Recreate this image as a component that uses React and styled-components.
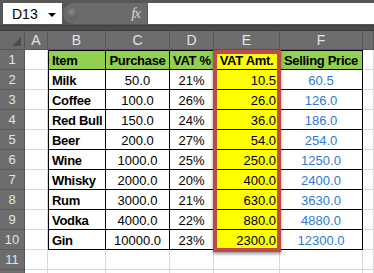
import React from 'react';
import styled, { createGlobalStyle } from 'styled-components';

const GlobalStyle = createGlobalStyle`
  html, body {
    margin: 0;
    padding: 0;
    background: #ffffff;
    overflow: hidden;
  }
  body {
    font-family: "Liberation Sans", Arial, sans-serif;
  }
`;

const rows = [
  ['Milk', '50.0', '21%', '10.5', '60.5'],
  ['Coffee', '100.0', '26%', '26.0', '126.0'],
  ['Red Bull', '150.0', '24%', '36.0', '186.0'],
  ['Beer', '200.0', '27%', '54.0', '254.0'],
  ['Wine', '1000.0', '25%', '250.0', '1250.0'],
  ['Whisky', '2000.0', '20%', '400.0', '2400.0'],
  ['Rum', '3000.0', '21%', '630.0', '3630.0'],
  ['Vodka', '4000.0', '22%', '880.0', '4880.0'],
  ['Gin', '10000.0', '23%', '2300.0', '12300.0'],
];

const headers = ['Item', 'Purchase', 'VAT %', 'VAT Amt.', 'Selling Price'];
const letters = ['A', 'B', 'C', 'D', 'E', 'F', ''];

// formula bar
const Page = styled.div`
  width: 374px;
  height: 273px;
  overflow: hidden;
`;

const FormulaBar = styled.div`
  display: flex;
  height: 22px;
  padding: 3px 0 0 3px;
  background: #585858;
`;

const NameBox = styled.div`
  display: flex;
  align-items: center;
  justify-content: space-between;
  width: 59px;
  height: 21px;
  padding: 0 6px 0 9px;
  box-sizing: border-box;
  background: #ffffff;
  font-size: 14px;
  color: #000;
`;

const Arrow = styled.span`
  width: 0;
  height: 0;
  border-left: 4px solid transparent;
  border-right: 4px solid transparent;
  border-top: 4px solid #000;
  margin-top: 2px;
`;

const FxArea = styled.div`
  display: flex;
  align-items: center;
  justify-content: space-between;
  width: 84px;
  height: 21px;
  margin-left: 1px;
  padding: 0 7px 0 4px;
  box-sizing: border-box;
  background: #6b6b6b;
  border-radius: 11px 0 0 11px;
`;

const Knob = styled.span`
  width: 11px;
  height: 11px;
  border-radius: 50%;
  background: radial-gradient(circle at 40% 35%, #8a8a8a, #4e4e4e);
`;

const Fx = styled.span`
  font-family: "Liberation Serif", serif;
  font-style: italic;
  font-size: 15px;
  color: #d6d6d6;
  letter-spacing: -1px;
`;

const FormulaInput = styled.div`
  flex: 1;
  height: 21px;
  margin-left: 1px;
  background: #ffffff;
`;

const Splitter = styled.div`
  height: 4px;
  background: #4a4a4a;
  border-bottom: 1px solid #3c3c3c;
  border-top: 1px solid #3e3e3e;
`;

// sheet
const Sheet = styled.div`
  position: relative;
  display: grid;
  grid-template-columns: 25px 23px 58px 64px 44px 66px 83px 1fr;
  grid-template-rows: 19px repeat(12, 20px);
`;

const Corner = styled.div`
  display: flex;
  align-items: flex-end;
  justify-content: flex-end;
  padding: 0 3px 3px 0;
  background: #6b6b6b;
  border-right: 1px solid #555;
  border-bottom: 1px solid #555;
`;

const ColHead = styled.div`
  display: flex;
  align-items: center;
  justify-content: center;
  background: #6d6d6d;
  color: #e4e4e4;
  font-size: 14px;
  border-right: 1px solid #575757;
  border-bottom: 1px solid #555;
`;

const RowHead = styled.div`
  display: flex;
  align-items: center;
  justify-content: center;
  background: #6d6d6d;
  color: #e4e4e4;
  font-size: 13px;
  border-right: 1px solid #555;
  border-bottom: 1px solid #5a5a5a;
`;

const Cell = styled.div`
  box-sizing: border-box;
  padding: 2px 3px 0;
  line-height: 17px;
  font-size: 13px;
  white-space: nowrap;
  overflow: hidden;
  background: ${(p) => p.$bg || '#ffffff'};
  color: ${(p) => p.$color || '#000'};
  font-weight: ${(p) => (p.$bold ? 700 : 400)};
  letter-spacing: ${(p) => (p.$bold ? '-0.3px' : '0')};
  text-align: ${(p) => p.$align || 'left'};
  border-right: 1px solid ${(p) => (p.$table ? '#000' : '#d8d8d8')};
  border-bottom: 1px solid ${(p) => (p.$table ? '#000' : '#d8d8d8')};
  border-top: ${(p) => (p.$top ? '1px solid #000' : 'none')};
  border-left: ${(p) => (p.$left ? '1px solid #000' : 'none')};
  padding-top: ${(p) => (p.$top ? '1px' : '2px')};
`;

// red selection frame lying over column E
const Highlight = styled.div`
  position: absolute;
  left: 213px;
  top: 19px;
  width: 68px;
  height: 202px;
  box-sizing: border-box;
  border: 4px solid #bd4b48;
  box-shadow: 0 2px 3px rgba(0, 0, 0, 0.4);
  pointer-events: none;
`;

const columnStyle = [
  { $align: 'left', $bold: true },
  { $align: 'center' },
  { $align: 'center' },
  { $align: 'right', $bg: '#ffff00' },
  { $align: 'center', $color: '#2b7bd6' },
];

function CornerTriangle() {
  return (
    <svg width="9" height="9" viewBox="0 0 9 9">
      <polygon points="9,0 9,9 0,9" fill="#4c4c4c" />
    </svg>
  );
}

export default function App() {
  const body = [headers, ...rows];

  return (
    <Page>
      <GlobalStyle />
      <FormulaBar>
        <NameBox>
          D13
          <Arrow />
        </NameBox>
        <FxArea>
          <Knob />
          <Fx>fx</Fx>
        </FxArea>
        <FormulaInput />
      </FormulaBar>
      <Splitter />
      <Sheet>
        <Corner>
          <CornerTriangle />
        </Corner>
        {letters.map((l, i) => (
          <ColHead key={'h' + i}>{l}</ColHead>
        ))}

        {Array.from({ length: 12 }).map((_, r) => {
          const data = body[r];
          return (
            <React.Fragment key={r}>
              {/* row 12 only peeks in at the bottom edge */}
              <RowHead>{r < 11 ? r + 1 : ''}</RowHead>
              <Cell />
              {[0, 1, 2, 3, 4].map((c) => {
                if (!data) return <Cell key={c} />;
                const header = r === 0;
                const st = columnStyle[c];
                return (
                  <Cell
                    key={c}
                    $table
                    $top={header}
                    $left={c === 0}
                    $bold={header || st.$bold}
                    $align={header ? (c === 0 ? 'left' : 'center') : st.$align}
                    $bg={header ? (c === 3 ? '#ffff00' : '#92d050') : st.$bg}
                    $color={header ? '#000' : st.$color}
                  >
                    {data[c]}
                  </Cell>
                );
              })}
              <Cell />
            </React.Fragment>
          );
        })}
        <Highlight />
      </Sheet>
    </Page>
  );
}
